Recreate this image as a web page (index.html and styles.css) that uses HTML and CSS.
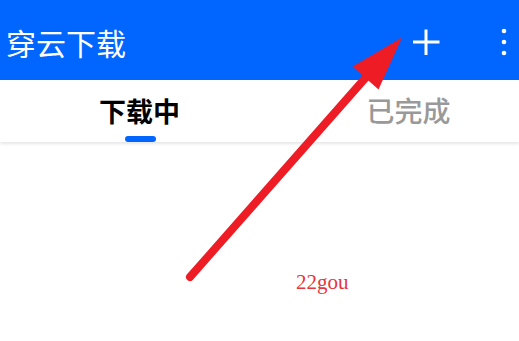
FILE: index.html
```html
<!DOCTYPE html>
<html lang="zh">
<head>
<meta charset="utf-8">
<link rel="stylesheet" href="styles.css">
</head>
<body>
<div class="app">
  <header class="topbar">
    <h1 class="title">穿云下载</h1>
    <div class="actions">
      <svg class="icon-plus" width="28" height="28" viewBox="0 0 28 28"><path d="M14 1.5V27M1 14H27.5" stroke="#fff" stroke-width="3" fill="none"/></svg>
      <svg class="icon-more" width="6" height="28" viewBox="0 0 6 28"><circle cx="3" cy="3" r="2.3" fill="#fff"/><circle cx="3" cy="14" r="2.3" fill="#fff"/><circle cx="3" cy="25" r="2.3" fill="#fff"/></svg>
    </div>
  </header>
  <nav class="tabs">
    <div class="tab active">下载中<span class="indicator"></span></div>
    <div class="tab">已完成</div>
  </nav>
  <main class="content"></main>
</div>
<svg class="arrow" width="519" height="341" viewBox="0 0 519 341">
  <line x1="190" y1="277" x2="368" y2="75" stroke="#ee1c25" stroke-width="8" stroke-linecap="round"/>
  <polygon points="402,37.5 352.5,66.5 378.5,89.5" fill="#ee1c25"/>
</svg>
<div class="watermark">22gou</div>
</body>
</html>
```
FILE: styles.css
```css
html, body {
  margin: 0;
  padding: 0;
  background: #fff;
  width: 519px;
  height: 341px;
  overflow: hidden;
}
.app {
  display: flex;
  flex-direction: column;
  height: 341px;
  font-family: "Noto Sans CJK SC", "Noto Sans", sans-serif;
}
.topbar {
  height: 80px;
  background: #0066ff;
  display: flex;
  align-items: center;
  justify-content: space-between;
  padding-left: 6px;
}
.title {
  margin: 0;
  color: #fff;
  font-size: 30px;
  font-weight: 400;
  line-height: 1;
  margin-top: 4px;
}
.actions {
  display: flex;
  align-items: center;
  gap: 61px;
  margin-right: 12px;
  margin-top: 4px;
}
.icon-plus, .icon-more { display: block; }
.tabs {
  height: 62px;
  display: grid;
  grid-template-columns: 269px 269px;
  padding-left: 5px;
  overflow: hidden;
  box-shadow: 0 2px 3px rgba(0,0,0,0.10);
  position: relative;
  z-index: 1;
}
.tab {
  position: relative;
  display: flex;
  justify-content: center;
  font-size: 27px;
  line-height: 1;
  color: #999;
  font-weight: 500;
  padding-top: 17px;
}
.tab:not(.active) {
  font-size: 28px;
  padding-top: 16px;
}
.tab.active {
  color: #000;
  font-weight: 700;
}
.indicator {
  position: absolute;
  left: 50%;
  margin-left: -15px;
  top: 56px;
  width: 31px;
  height: 6px;
  border-radius: 3px;
  background: #0066ff;
}
.content {
  flex: 1;
  background: #fff;
}
.arrow {
  position: absolute;
  left: 0;
  top: 0;
  z-index: 2;
}
.watermark {
  position: absolute;
  left: 296px;
  top: 272px;
  z-index: 3;
  font-family: "Liberation Serif", "Times New Roman", serif;
  font-size: 21px;
  color: #e8343c;
  line-height: 1;
}
```
